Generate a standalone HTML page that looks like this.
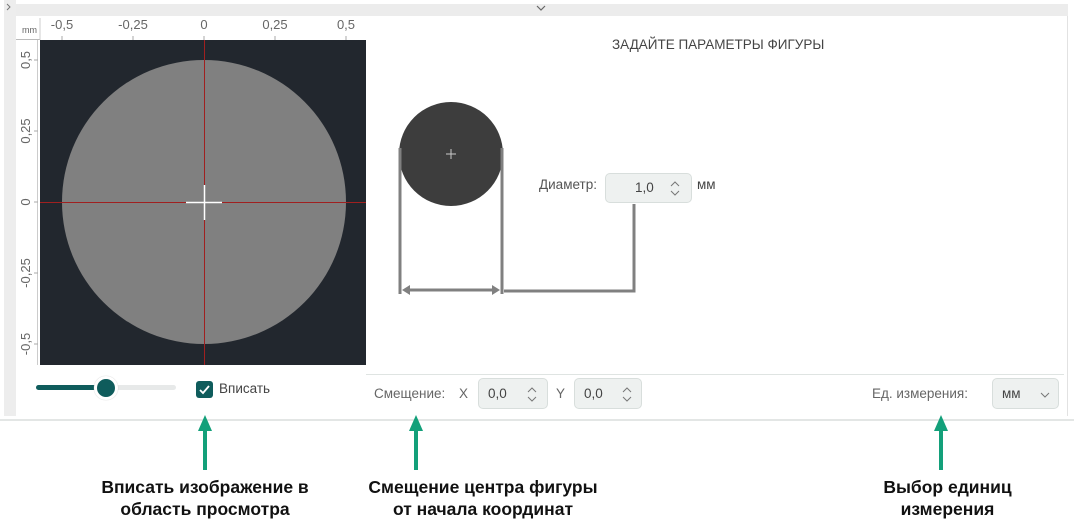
<!DOCTYPE html>
<html><head><meta charset="utf-8"><style>
body{margin:0;width:1074px;height:522px;background:#fff;position:relative;overflow:hidden;font-family:"Liberation Sans",sans-serif}
.a{position:absolute}
.t{font-size:13.5px;color:#555;white-space:nowrap}
.box{position:absolute;background:#eef1f0;border:1px solid #d8dedc;border-radius:5px;box-sizing:border-box}
.b{font-weight:bold;font-size:17.5px;color:#111;text-align:center;line-height:22px;white-space:nowrap}
.sp{position:absolute;top:8px}
</style></head><body>
<div class="a" style="left:4px;top:0;width:12px;height:416px;background:#ededed"></div>
<div class="a" style="left:16px;top:4px;width:1052px;height:12px;background:#ececec"></div>
<div class="a" style="left:1067px;top:16px;width:1px;height:400px;background:#e2e2e2"></div>
<div class="a" style="left:0;top:419px;width:1074px;height:2px;background:#e3e6e5"></div>
<div class="a" style="left:366px;top:374px;width:698px;height:1px;background:#dfe4e2"></div>
<svg class="a" style="left:0;top:0" width="1074" height="420">
<path d="M7 4l3 3-3 3" fill="none" stroke="#777" stroke-width="1"/>
<path d="M537 6l4 4 4-4" fill="none" stroke="#666" stroke-width="1.2"/>
<line x1="16" y1="39.5" x2="40" y2="39.5" stroke="#bbb"/>
<line x1="40" y1="18" x2="40" y2="40" stroke="#ccc"/>
<line x1="37.5" y1="40" x2="37.5" y2="365" stroke="#ccc"/>
<g stroke="#aaa">
<line x1="62" y1="36" x2="62" y2="40"/><line x1="133" y1="36" x2="133" y2="40"/><line x1="204" y1="36" x2="204" y2="40"/><line x1="275" y1="36" x2="275" y2="40"/><line x1="346" y1="36" x2="346" y2="40"/>
<line x1="34" y1="60" x2="38" y2="60"/><line x1="34" y1="131" x2="38" y2="131"/><line x1="34" y1="202" x2="38" y2="202"/><line x1="34" y1="273" x2="38" y2="273"/><line x1="34" y1="344" x2="38" y2="344"/>
</g>
<text x="22" y="33" font-size="9" fill="#666">mm</text>
<g font-size="13" fill="#666" text-anchor="middle">
<text x="62" y="29">-0,5</text><text x="133" y="29">-0,25</text><text x="204" y="29">0</text><text x="275" y="29">0,25</text><text x="346" y="29">0,5</text>
<text transform="translate(30,60) rotate(-90)">0,5</text>
<text transform="translate(30,131) rotate(-90)">0,25</text>
<text transform="translate(30,202) rotate(-90)">0</text>
<text transform="translate(30,273) rotate(-90)">-0,25</text>
<text transform="translate(30,344) rotate(-90)">-0,5</text>
</g>
<rect x="40" y="40" width="326" height="325" fill="#22272e"/>
<circle cx="204" cy="202" r="142" fill="#808080"/>
<line x1="204.5" y1="40" x2="204.5" y2="365" stroke="#a02020"/>
<line x1="40" y1="202.5" x2="366" y2="202.5" stroke="#a02020"/>
<line x1="186" y1="202.5" x2="222" y2="202.5" stroke="#fff" stroke-width="1.5"/>
<line x1="204.5" y1="185" x2="204.5" y2="220" stroke="#fff" stroke-width="1.5"/>
<circle cx="451" cy="154" r="52" fill="#3d3d3d"/>
<path d="M446 154h10M451 149v10" stroke="#ccc"/>
<g stroke="#808080" stroke-width="3" fill="none">
<line x1="400" y1="148" x2="400" y2="294"/><line x1="502" y1="148" x2="502" y2="294"/>
<line x1="406" y1="290" x2="496" y2="290"/>
<path d="M504 291H634V204"/>
</g>
<path d="M402 290l8-5v10zM500 290l-8-5v10z" fill="#808080"/>
</svg>
<div class="a t" style="left:612px;top:37px;color:#444">ЗАДАЙТЕ ПАРАМЕТРЫ ФИГУРЫ</div>
<div class="a t" style="left:539px;top:177px">Диаметр:</div>
<div class="box" style="left:605px;top:173px;width:87px;height:30px"><span class="a t" style="left:29px;top:6px;color:#444">1,0</span><svg class="sp" style="left:64px;top:7px" width="10" height="15"><path d="M1 5l4-4 4 4M1 10l4 4 4-4" stroke="#777" fill="none"/></svg></div>
<div class="a t" style="left:697px;top:177px;color:#444">мм</div>
<div class="a" style="left:36px;top:385px;width:70px;height:5px;background:#0f5c5c;border-radius:3px"></div>
<div class="a" style="left:106px;top:385px;width:70px;height:5px;background:#e7e9e9;border-radius:3px"></div>
<div class="a" style="left:94px;top:376px;width:18px;height:18px;border-radius:50%;background:#0f5c5c;border:3px solid #fff;box-shadow:0 0 1px #bbb"></div>
<div class="a" style="left:196px;top:381px;width:17px;height:17px;background:#0f5c5c;border-radius:3px"><svg width="17" height="17"><path d="M4 9l3 3 6-7" stroke="#fff" stroke-width="1.8" fill="none"/></svg></div>
<div class="a t" style="left:219px;top:381px;color:#444">Вписать</div>
<div class="a t" style="left:374px;top:386px;color:#666">Смещение:</div>
<div class="a t" style="left:459px;top:386px;color:#666">X</div>
<div class="box" style="left:478px;top:378px;width:70px;height:31px"><span class="a t" style="left:9px;top:7px;color:#444">0,0</span><svg class="sp" style="left:48px" width="10" height="15"><path d="M1 5l4-4 4 4M1 10l4 4 4-4" stroke="#777" fill="none"/></svg></div>
<div class="a t" style="left:556px;top:386px;color:#666">Y</div>
<div class="box" style="left:574px;top:378px;width:68px;height:31px"><span class="a t" style="left:9px;top:7px;color:#444">0,0</span><svg class="sp" style="left:47px" width="10" height="15"><path d="M1 5l4-4 4 4M1 10l4 4 4-4" stroke="#777" fill="none"/></svg></div>
<div class="a t" style="left:872px;top:386px;color:#666">Ед. измерения:</div>
<div class="box" style="left:992px;top:378px;width:67px;height:31px"><span class="a t" style="left:9px;top:7px;color:#444">мм</span><svg class="a" style="left:47px;top:13px" width="10" height="6"><path d="M1 1l4 4 4-4" stroke="#777" fill="none"/></svg></div>
<svg class="a" style="left:0;top:410px" width="1074" height="70">
<g stroke="#13a07a" stroke-width="4"><line x1="205" y1="18" x2="205" y2="60"/><line x1="416" y1="18" x2="416" y2="60"/><line x1="941" y1="18" x2="941" y2="60"/></g>
<g fill="#13a07a"><path d="M205 5l-7 16h14z"/><path d="M416 5l-7 16h14z"/><path d="M941 5l-7 16h14z"/></g>
</svg>
<div class="a b" style="left:55px;top:476px;width:300px">Вписать изображение в<br>область просмотра</div>
<div class="a b" style="left:333px;top:476px;width:300px">Смещение центра фигуры<br>от начала координат</div>
<div class="a b" style="left:830px;top:476px;width:235px">Выбор единиц<br>измерения</div>
</body></html>
